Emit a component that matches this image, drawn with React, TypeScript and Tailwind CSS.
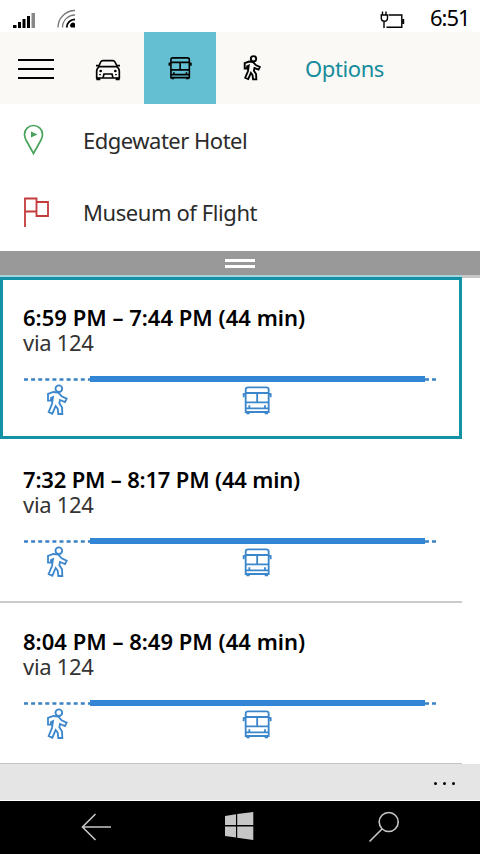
import type { ReactNode } from 'react';

interface IconProps {
  className?: string;
  strokeWidth?: number;
}

interface Trip {
  time: string;
  via: string;
  tracking: string;
  selected?: boolean;
}

const trips: Trip[] = [
  { time: '6:59 PM – 7:44 PM (44 min)', via: 'via 124', tracking: 'tracking-[0.02px]', selected: true },
  { time: '7:32 PM – 8:17 PM (44 min)', via: 'via 124', tracking: 'tracking-[-0.18px]' },
  { time: '8:04 PM – 8:49 PM (44 min)', via: 'via 124', tracking: 'tracking-[0.02px]' },
];

function WalkIcon({ className, strokeWidth = 5.5 }: IconProps) {
  return (
    <svg viewBox="0 0 66 96" className={className} fill="none" stroke="currentColor" strokeWidth={strokeWidth}>
      <circle cx="38.500" cy="14" r="10" />
      <path d="M6 50V30L22 24L37 26L47 37L62 44L57 54L42 48L40 58L48 70L49 90H37L35 74L29 66L19 89L8 84L18 60L21 39L15 42V50Z" />
    </svg>
  );
}

function BusIcon({ className, strokeWidth = 5.5 }: IconProps) {
  return (
    <svg viewBox="0 0 90 90" className={className} fill="none" stroke="currentColor" strokeWidth={strokeWidth}>
      <path d="M11 81V14Q11 7 18 7H73Q80 7 80 14V81Z" />
      <path d="M11 24H80M45.500 24V52M11 52H80M11 70H80" />
      <path d="M5 25V37M86 25V37M5 27H11M80 27H86" />
      <path d="M22 61V70M69 61V70" />
      <path d="M13 84H23M68 84H78" strokeWidth="7" />
    </svg>
  );
}

function CarIcon({ className }: IconProps) {
  return (
    <svg viewBox="0 0 78 66" className={className} fill="none" stroke="currentColor" strokeWidth="5">
      <path d="M11 23L17 9Q19 5 24 5H53Q58 5 60 9L67 23" />
      <path d="M13 23H65Q73 28 73 37V57H5V37Q5 28 13 23Z" />
      <path d="M3 20H12M66 20H75" />
      <path d="M24 56L27 45H51L54 56" />
      <circle cx="17" cy="36" r="4" fill="currentColor" stroke="none" />
      <circle cx="61" cy="36" r="4" fill="currentColor" stroke="none" />
      <path d="M12 47H18M60 47H66" strokeWidth="3" />
      <path d="M4 60H16M62 60H74" strokeWidth="8" />
    </svg>
  );
}

function StatusBar() {
  return (
    <header className="flex h-8 items-start bg-white text-black">
      <svg viewBox="0 0 24 17" className="mt-[12px] ml-3 h-[17px] w-6" fill="currentColor">
        <path d="M1 13h3.500v3H1zM6 10h3v6H6zM10.500 7h3v9h-3zM15 4h3v12h-3z" />
        <path d="M19.500 1H23v15h-3.500z" fill="#888" />
      </svg>
      <svg viewBox="0 0 20 20" className="mt-[9px] ml-5 h-5 w-5" fill="none" strokeWidth="1.300">
        <path d="M2 18.500A17 17 0 0 1 19 1.500M6.500 18.500A12.500 12.500 0 0 1 19 6" stroke="#777" />
        <path d="M10.800 18.500A8.200 8.200 0 0 1 19 10.300" stroke="#000" strokeWidth="1.800" />
        <path d="M19 14.500V18.500H15A2.300 2.300 0 1 1 19 14.500Z" fill="#000" />
      </svg>
      <svg viewBox="0 0 26 19" className="mt-[10px] ml-auto h-[19px] w-[26px]" fill="none" stroke="currentColor" strokeWidth="1.400">
        <path d="M3.500 1.500V5M7 1.500V5M1.500 5H9.500M2.300 5V8Q2.300 11.300 5.300 11.300Q8.500 11.300 8.500 8V5M5 11.300V18" />
        <path d="M10 5H22.800V17.300H7.500" />
        <path d="M24.200 9V14" strokeWidth="2" />
      </svg>
      <span className="mt-[2px] mr-[11px] ml-[25px] w-[39px] text-[22px] leading-[30px] tracking-[-1px] whitespace-nowrap">6:51</span>
    </header>
  );
}

function Toolbar() {
  return (
    <nav className="flex h-[72px] items-center bg-[#faf9f5] text-black">
      <button type="button" aria-label="Menu" className="grid h-full w-[72px] content-center justify-center gap-[7px] pt-[2px]">
        <span className="h-0.5 w-9 bg-black" />
        <span className="h-0.5 w-9 bg-black" />
        <span className="h-0.5 w-9 bg-black" />
      </button>
      <button type="button" aria-label="Drive" className="grid h-full w-[72px] place-items-center pt-[3px]">
        <CarIcon className="h-[22px] w-[26px]" />
      </button>
      <button type="button" aria-label="Transit" className="grid h-full w-[72px] place-items-center bg-[#63bfd1]">
        <BusIcon className="h-6 w-6" strokeWidth={6} />
      </button>
      <button type="button" aria-label="Walk" className="grid h-full w-[72px] place-items-center">
        <WalkIcon className="h-[26px] w-[18px]" strokeWidth={7} />
      </button>
      <span className="ml-[17px] text-[22px] tracking-[-0.4px] text-[#158c9c]">Options</span>
    </nav>
  );
}

function Place({ icon, name, tracking }: { icon: ReactNode; name: string; tracking: string }) {
  return (
    <div className="flex h-[72px] items-center text-[22px] text-[#2b2b2b]">
      <span className="w-[83px] pl-[22px]">{icon}</span>
      <span className={tracking}>{name}</span>
    </div>
  );
}

function TripItem({ trip, divided }: { trip: Trip; divided: boolean }) {
  const frame = trip.selected
    ? 'border-[3px] border-[#1292a4] pt-[25px] pl-[20px]'
    : divided
      ? 'border-t-2 border-[#cbcbcb] pt-[26px] pl-[23px]'
      : 'pt-[28px] pl-[23px]';

  return (
    <li className={`h-[162px] w-[462px] ${frame}`}>
      <p className={`text-[22px] leading-[25px] font-semibold whitespace-nowrap text-black ${trip.tracking}`}>{trip.time}</p>
      <p className="text-[22px] leading-[25px] tracking-[-0.3px] text-[#333]">{trip.via}</p>
      <div className="mt-[21px] flex h-[6px] w-[413px] items-center">
        <svg viewBox="0 0 66 3" className="ml-px h-[3px] w-[66px]" stroke="#3b83c4" strokeWidth="2.300">
          <path d="M0 1.500H66" strokeDasharray="4 3.100" />
        </svg>
        <span className="h-[6px] w-[335px] bg-[#3385d6]" />
        <svg viewBox="0 0 11 3" className="h-[3px] w-[11px]" stroke="#3b83c4" strokeWidth="2.300">
          <path d="M0 1.500H11" strokeDasharray="4 3" />
        </svg>
      </div>
      <div className="flex items-start text-[#3c87cc]">
        <WalkIcon className="mt-[2px] ml-[23px] h-8 w-[22px]" />
        <BusIcon className="mt-[3px] ml-[174px] h-[30px] w-[30px]" />
      </div>
    </li>
  );
}

function NavBar() {
  return (
    <footer className="flex h-[53px] items-start bg-black text-[#c6c6c6]">
      <svg viewBox="0 0 30 28" className="mt-[12px] ml-[81px] h-7 w-[30px]" fill="none" stroke="currentColor" strokeWidth="1.600">
        <path d="M30 14H1.500M14.500 1L1.500 14L14.500 27" />
      </svg>
      <svg viewBox="0 0 30 30" className="mt-[10px] ml-[113px] h-[30px] w-[30px]" fill="currentColor">
        <path d="M1 5L12 3.200V14H1zM13.200 3L29.300 1V14H13.200zM1 15.500H12V26.500L1 25zM13.200 15.500H29.300V29L13.200 26.800z" />
      </svg>
      <svg viewBox="0 0 32 32" className="mt-[10px] ml-[114px] h-8 w-8" fill="none" stroke="currentColor" strokeWidth="1.600">
        <circle cx="20.700" cy="11" r="9.500" />
        <path d="M14 18L1.500 30.500" />
      </svg>
    </footer>
  );
}

export default function App() {
  return (
    <div className="h-[854px] w-[480px] overflow-hidden bg-white font-['Noto_Sans','Open_Sans',sans-serif]">
      <StatusBar />
      <Toolbar />
      <section className="h-[147px]">
        <Place
          name="Edgewater Hotel"
          tracking="tracking-[-0.5px]"
          icon={
            <svg viewBox="0 0 24 32" className="h-8 w-6" fill="none" stroke="#49a35c" strokeWidth="1.700">
              <path d="M11.500 29.500L4 16Q2.500 13 2.500 10.500A9 9 0 0 1 20.500 10.500Q20.500 13 19 16Z" />
              <path d="M9 7.500L15.500 10.500L9 13.500Z" fill="#49a35c" stroke="none" />
            </svg>
          }
        />
        <Place
          name="Museum of Flight"
          tracking="tracking-[-0.42px]"
          icon={
            <svg viewBox="0 0 28 32" className="h-8 w-7" fill="none" stroke="#c33b3b" strokeWidth="1.800">
              <path d="M3 31V2.500H14.500V15.500H3M14.500 6H26V20H14.500V15.500" />
            </svg>
          }
        />
      </section>
      <div className="grid h-6 content-center justify-center gap-[3px] bg-[#999]">
        <span className="h-[3px] w-[30px] bg-white" />
        <span className="h-[3px] w-[30px] bg-white" />
      </div>
      <div className="flex h-0.5 justify-between bg-[#a9d3da]">
        <span className="ml-auto h-[3px] w-[18px] bg-[#c8c8c8]" />
      </div>
      <ul>
        {trips.map((trip, index) => (
          <TripItem key={trip.time} trip={trip} divided={index === 2} />
        ))}
      </ul>
      <div className="h-px w-[462px] bg-[#c4c4c4]" />
      <div className="flex h-9 items-center justify-end gap-[6px] bg-[#e5e5e5] pt-[3px] pr-[25px]">
        <span className="h-[3px] w-[3px] rounded-full bg-black" />
        <span className="h-[3px] w-[3px] rounded-full bg-black" />
        <span className="h-[3px] w-[3px] rounded-full bg-black" />
      </div>
      <div className="h-px bg-white" />
      <NavBar />
    </div>
  );
}
